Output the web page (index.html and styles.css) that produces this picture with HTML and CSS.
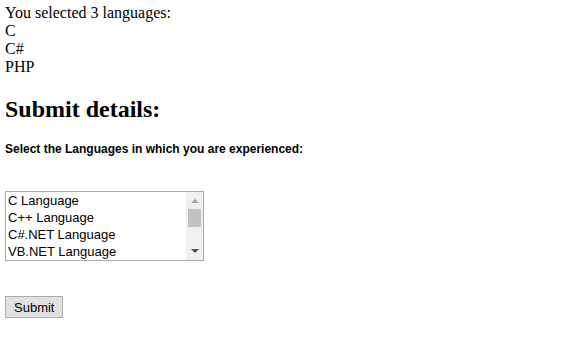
FILE: index.html
```html
<!DOCTYPE html>
<html lang="en">
<head>
    <meta charset="UTF-8">
    <title>Submit details</title>
    <link rel="stylesheet" href="styles.css">
</head>
<body>
    <div class="result">
        You selected 3 languages:<br>
        C<br>
        C#<br>
        PHP
    </div>

    <h2>Submit details:</h2>
    <h5>Select the Languages in which you are experienced:</h5>

    <form class="form">
        <div class="listbox">
            <ul class="options">
                <li>C Language</li>
                <li>C++ Language</li>
                <li>C#.NET Language</li>
                <li>VB.NET Language</li>
            </ul>
            <div class="scrollbar">
                <span class="arrow up"></span>
                <span class="track"><span class="thumb"></span></span>
                <span class="arrow down"></span>
            </div>
        </div>
        <button type="button" class="submit">Submit</button>
    </form>
</body>
</html>
```
FILE: styles.css
```css
body {
    margin: 4px 5px;
    font-family: "Liberation Serif", "Times New Roman", serif;
    font-size: 16px;
    line-height: 18px;
    color: #000;
    background: #fff;
}
.result {
    margin: 0;
}
h2 {
    font-size: 24px;
    line-height: 28px;
    margin: 19px 0 0;
}
h5 {
    font-family: "Liberation Sans", Arial, sans-serif;
    font-size: 12px;
    line-height: 14px;
    margin: 19px 0 0;
}
.form {
    margin-top: 35px;
}
.listbox {
    display: flex;
    width: 197px;
    height: 68px;
    border: 1px solid #a9a9a9;
    font-family: "Liberation Sans", Arial, sans-serif;
    font-size: 13px;
    line-height: 17px;
}
.options {
    flex: 1;
    list-style: none;
    margin: 0;
    padding: 0 0 0 2px;
}
.scrollbar {
    width: 17px;
    display: flex;
    flex-direction: column;
    background: #f0f0f0;
}
.arrow {
    height: 17px;
    position: relative;
}
.arrow::after {
    content: "";
    position: absolute;
    left: 5px;
    width: 0;
    height: 0;
    border-left: 4px solid transparent;
    border-right: 4px solid transparent;
}
.up::after {
    top: 7px;
    border-bottom: 4px solid #a3a3a3;
}
.down::after {
    top: 6px;
    border-top: 4px solid #505050;
}
.track {
    flex: 1;
    padding: 0 2px;
}
.thumb {
    display: block;
    height: 18px;
    background: #c1c1c1;
}
.submit {
    display: block;
    margin-top: 35px;
    padding: 1px 8px;
    height: 22px;
    font-family: "Liberation Sans", Arial, sans-serif;
    font-size: 13px;
    color: #000;
    background: #e1e1e1;
    border: 1px solid #adadad;
    border-radius: 0;
}
```
